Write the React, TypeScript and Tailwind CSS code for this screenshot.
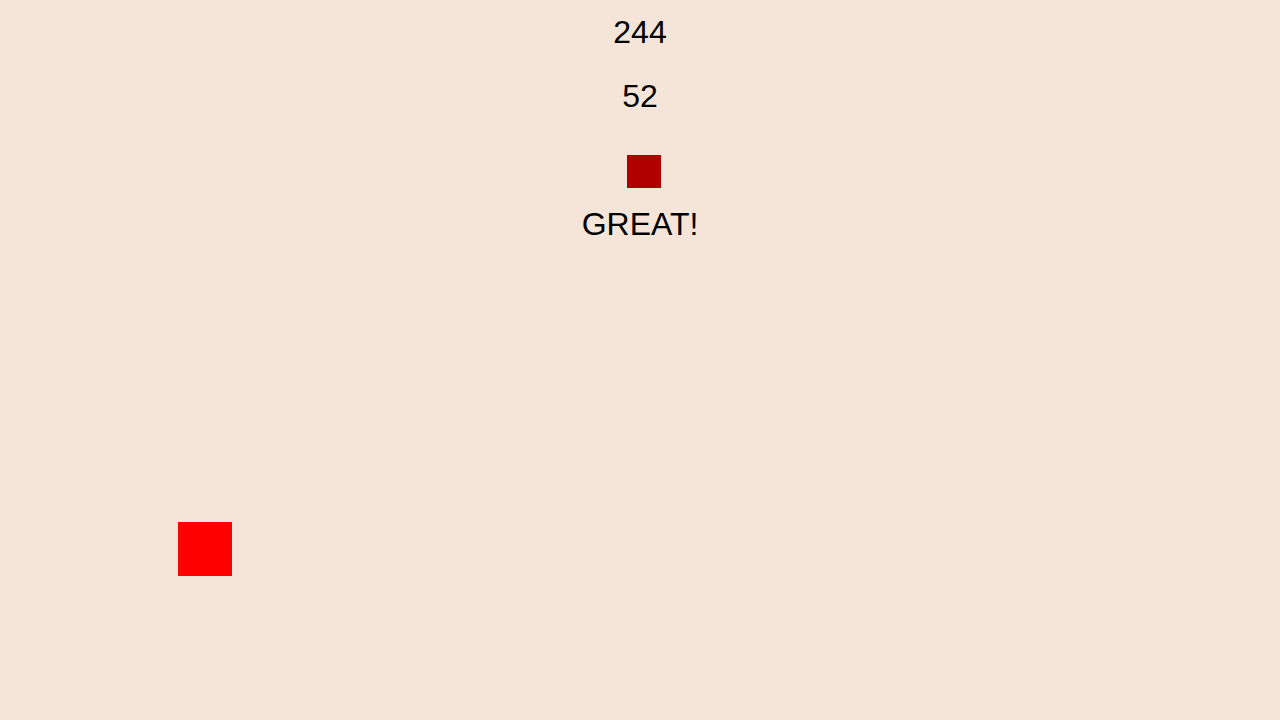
export default function App() {
  return (
    <div
      className="relative h-[720px] w-[1280px] overflow-hidden bg-[#f5e5d8] text-black"
      style={{ fontFamily: '"Liberation Sans", Arial, sans-serif' }}
    >
      <div className="flex flex-col items-center pt-[14px]">
        <div className="text-[32px] leading-[37px]">244</div>
        <div className="mt-[27px] text-[32px] leading-[37px]">52</div>
        <div className="ml-[7px] mt-[40px] h-[33px] w-[34px] bg-[#b00000]" />
        <div className="mt-[18px] text-[32px] leading-[37px]">GREAT!</div>
      </div>
      <div className="absolute left-[178px] top-[522px] h-[54px] w-[54px] bg-[#ff0000]" />
    </div>
  )
}
